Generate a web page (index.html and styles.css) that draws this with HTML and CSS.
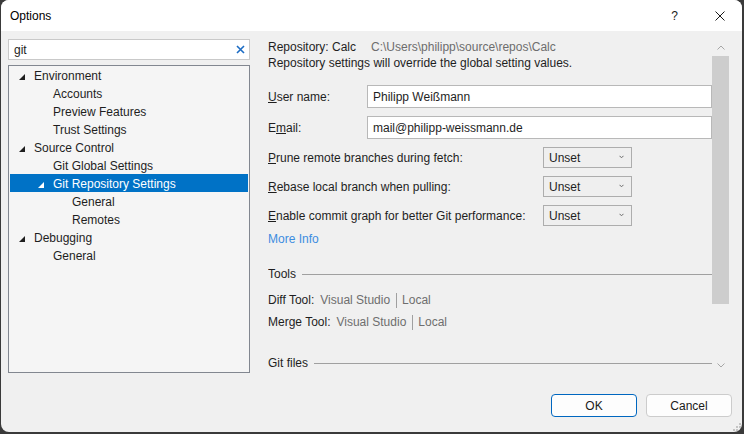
FILE: index.html
```html
<!DOCTYPE html>
<html>
<head>
<meta charset="utf-8">
<link rel="stylesheet" href="styles.css">
</head>
<body>
<div class="window">
  <div class="titlebar">
    <span class="title">Options</span>
    <span class="tb-btn help">?</span>
    <span class="tb-btn close">
      <svg width="10" height="10" viewBox="0 0 10 10"><path d="M0.5 0.5 L9.5 9.5 M9.5 0.5 L0.5 9.5" stroke="#1a1a1a" stroke-width="1"/></svg>
    </span>
  </div>
  <div class="main">
    <div class="left">
      <div class="search">
        <span class="search-text">git</span>
        <svg class="search-clear" width="9" height="9" viewBox="0 0 9 9"><path d="M1 1 L8 8 M8 1 L1 8" stroke="#1c6cc4" stroke-width="1.6"/></svg>
      </div>
      <div class="tree">
        <div class="row l1"><span class="arrow"><svg width="6" height="6" viewBox="0 0 6 6"><polygon points="6,0 6,6 0,6" fill="#1e1e1e"/></svg></span><span class="txt">Environment</span></div>
        <div class="row l2"><span class="arrow"></span><span class="txt">Accounts</span></div>
        <div class="row l2"><span class="arrow"></span><span class="txt">Preview Features</span></div>
        <div class="row l2"><span class="arrow"></span><span class="txt">Trust Settings</span></div>
        <div class="row l1"><span class="arrow"><svg width="6" height="6" viewBox="0 0 6 6"><polygon points="6,0 6,6 0,6" fill="#1e1e1e"/></svg></span><span class="txt">Source Control</span></div>
        <div class="row l2"><span class="arrow"></span><span class="txt">Git Global Settings</span></div>
        <div class="row l2 selected"><span class="arrow"><svg width="6" height="6" viewBox="0 0 6 6"><polygon points="6,0 6,6 0,6" fill="#ffffff"/></svg></span><span class="txt">Git Repository Settings</span></div>
        <div class="row l3"><span class="arrow"></span><span class="txt">General</span></div>
        <div class="row l3"><span class="arrow"></span><span class="txt">Remotes</span></div>
        <div class="row l1"><span class="arrow"><svg width="6" height="6" viewBox="0 0 6 6"><polygon points="6,0 6,6 0,6" fill="#1e1e1e"/></svg></span><span class="txt">Debugging</span></div>
        <div class="row l2"><span class="arrow"></span><span class="txt">General</span></div>
      </div>
    </div>
    <div class="right">
      <div class="panel">
        <div class="line">Repository: Calc<span class="path">C:\Users\philipp\source\repos\Calc</span></div>
        <div class="line">Repository settings will override the global setting values.</div>

        <div class="field first">
          <span class="label"><u>U</u>ser name:</span>
          <div class="input">Philipp Weißmann</div>
        </div>
        <div class="field">
          <span class="label">E<u>m</u>ail:</span>
          <div class="input">mail@philipp-weissmann.de</div>
        </div>

        <div class="opt first">
          <span class="opt-label"><u>P</u>rune remote branches during fetch:</span>
          <div class="select">Unset<svg width="5" height="4" viewBox="0 0 5 4"><path d="M0.5 0.8 L2.5 2.8 L4.5 0.8" stroke="#6a6a6a" fill="none" stroke-width="1"/></svg></div>
        </div>
        <div class="opt">
          <span class="opt-label"><u>R</u>ebase local branch when pulling:</span>
          <div class="select">Unset<svg width="5" height="4" viewBox="0 0 5 4"><path d="M0.5 0.8 L2.5 2.8 L4.5 0.8" stroke="#6a6a6a" fill="none" stroke-width="1"/></svg></div>
        </div>
        <div class="opt">
          <span class="opt-label"><u>E</u>nable commit graph for better Git performance:</span>
          <div class="select">Unset<svg width="5" height="4" viewBox="0 0 5 4"><path d="M0.5 0.8 L2.5 2.8 L4.5 0.8" stroke="#6a6a6a" fill="none" stroke-width="1"/></svg></div>
        </div>
        <div class="line link">More Info</div>

        <div class="section tools">Tools<span class="rule"></span></div>
        <div class="toolrow first">Diff Tool:<span class="tool-val">Visual Studio</span><span class="sep"></span><span class="tool-val2">Local</span></div>
        <div class="toolrow">Merge Tool:<span class="tool-val">Visual Studio</span><span class="sep"></span><span class="tool-val2">Local</span></div>

        <div class="section gitfiles">Git files<span class="rule"></span></div>
      </div>
      <div class="scrollbar">
        <div class="sb-btn"><svg width="8" height="5" viewBox="0 0 8 5"><path d="M0.5 4.5 L4 1 L7.5 4.5" stroke="#a6a6a6" fill="none" stroke-width="1"/></svg></div>
        <div class="sb-thumb"></div>
        <div class="sb-track"></div>
        <div class="sb-btn"><svg width="8" height="5" viewBox="0 0 8 5"><path d="M0.5 0.5 L4 4 L7.5 0.5" stroke="#a6a6a6" fill="none" stroke-width="1"/></svg></div>
      </div>
    </div>
  </div>
  <div class="footer">
    <div class="btn default">OK</div>
    <div class="btn">Cancel</div>
  </div>
  <svg class="grip" width="8" height="8" viewBox="0 0 8 8">
    <rect x="6" y="0" width="2" height="2" fill="#c4c4c4"/>
    <rect x="3" y="3" width="2" height="2" fill="#c4c4c4"/>
    <rect x="6" y="3" width="2" height="2" fill="#c4c4c4"/>
    <rect x="0" y="6" width="2" height="2" fill="#c4c4c4"/>
    <rect x="3" y="6" width="2" height="2" fill="#c4c4c4"/>
    <rect x="6" y="6" width="2" height="2" fill="#c4c4c4"/>
  </svg>
</div>
</body>
</html>
```
FILE: styles.css
```css
* { box-sizing: border-box; }
html, body { margin: 0; padding: 0; }
body {
  background: #3a3a3a;
  width: 744px;
  height: 434px;
  overflow: hidden;
  font-family: "Liberation Sans", Arial, sans-serif;
  font-size: 12px;
  color: #1e1e1e;
}
.window {
  position: relative;
  margin-left: 1px;
  width: 741px;
  height: 432px;
  background: #f0f0f0;
  border-radius: 8px;
  overflow: hidden;
  display: flex;
  flex-direction: column;
}
.titlebar {
  height: 31px;
  flex: none;
  background: #ffffff;
  display: flex;
  align-items: center;
  padding-left: 9px;
}
.title { font-size: 12px; color: #000; padding-top: 1px; }
.tb-btn {
  width: 45px;
  height: 31px;
  display: flex;
  align-items: center;
  justify-content: center;
  font-size: 12px;
  color: #1a1a1a;
}
.help { margin-left: auto; }
.main {
  display: flex;
  height: 343px;
  flex: none;
}
.left {
  width: 242px;
  margin-left: 7px;
  flex: none;
}
.search {
  margin-top: 8px;
  height: 21px;
  background: #fff;
  border: 1px solid #c9c9c9;
  display: flex;
  align-items: center;
  padding: 0 4px 0 5px;
}
.search-text { flex: 1; }
.search-clear { flex: none; }
.tree {
  margin-top: 5px;
  height: 308px;
  background: #f5f5f5;
  border: 1px solid #828790;
  padding: 0 1px;
}
.row {
  height: 18px;
  display: flex;
  align-items: center;
  white-space: nowrap;
}
.row .txt { padding-top: 1px; }
.row.l1 { padding-left: 9px; }
.row.l2 { padding-left: 28px; }
.row.l3 { padding-left: 47px; }
.row.selected { background: #0072c6; color: #fff; }
.arrow {
  width: 15px;
  flex: none;
  height: 18px;
  display: flex;
  align-items: center;
  padding-top: 3px;
}
.arrow svg { display: block; }
.right {
  margin-left: 18px;
  width: 461px;
  display: flex;
  flex: none;
}
.panel {
  width: 444px;
  margin-top: 8px;
  height: 335px;
  overflow: hidden;
  flex: none;
}
.line { line-height: 16px; height: 16px; white-space: nowrap; }
.path { color: #6d6d6d; margin-left: 15px; }
.link { color: #3c8ce0; margin-top: 5px; }
.field {
  display: flex;
  align-items: center;
  margin-top: 8px;
}
.field.first { margin-top: 14px; }
.label { width: 99px; flex: none; }
.input {
  flex: 1;
  height: 23px;
  background: #fff;
  border: 1px solid #b8b8b8;
  display: flex;
  align-items: center;
  padding-left: 5px;
}
.opt {
  display: flex;
  align-items: center;
  margin-top: 8px;
}
.opt.first { margin-top: 8px; }
.opt-label { width: 275px; flex: none; white-space: nowrap; }
.select {
  width: 89px;
  height: 21px;
  border: 1px solid #adadad;
  background: #efefef;
  display: flex;
  align-items: center;
  justify-content: space-between;
  padding: 0 7px 0 5px;
}
.select svg { display: block; margin-top: -1px; }
.section {
  display: flex;
  align-items: center;
  line-height: 16px;
  height: 16px;
}
.section.tools { margin-top: 19px; }
.section.gitfiles { margin-top: 25px; }
.rule {
  flex: 1;
  height: 1px;
  background: #a0a0a0;
  margin-left: 6px;
}
.toolrow {
  display: flex;
  align-items: center;
  line-height: 16px;
  height: 16px;
  margin-top: 6px;
  white-space: nowrap;
}
.toolrow.first { margin-top: 10px; }
.tool-val { color: #6e6e6e; margin-left: 6px; }
.tool-val2 { color: #6e6e6e; }
.sep {
  width: 1px;
  height: 15px;
  background: #a0a0a0;
  margin: 0 5px 0 6px;
}
.scrollbar {
  width: 17px;
  margin-top: 7px;
  height: 336px;
  display: flex;
  flex-direction: column;
  flex: none;
}
.sb-btn {
  height: 18px;
  display: flex;
  align-items: center;
  justify-content: center;
  flex: none;
}
.sb-thumb {
  height: 248px;
  background: #cdcdcd;
  flex: none;
}
.sb-track { flex: 1; }
.footer {
  display: flex;
  justify-content: flex-end;
  padding: 20px 10px 0 0;
  gap: 9px;
}
.btn {
  width: 86px;
  height: 23px;
  border: 1px solid #cccccc;
  border-radius: 4px;
  background: #fdfdfd;
  display: flex;
  align-items: center;
  justify-content: center;
  color: #1a1a1a;
}
.btn.default {
  border: 1.5px solid #0067c0;
}
.grip {
  position: absolute;
  right: 1px;
  bottom: 1px;
}
```
